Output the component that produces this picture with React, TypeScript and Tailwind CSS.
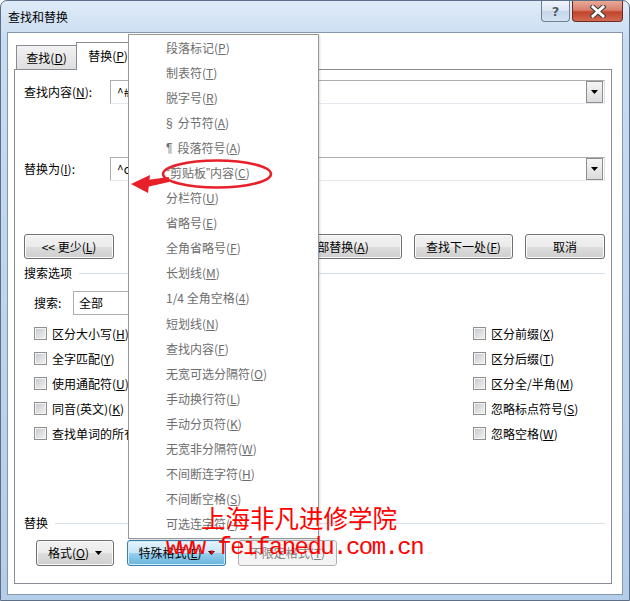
import type { ReactNode } from 'react'

const CJK = "font-['Microsoft_YaHei','Noto_Sans_CJK_SC',sans-serif]"

const Mn = ({ text, k, after = '' }: { text: string; k: string; after?: string }) => (
  <>
    {text}(<u>{k}</u>){after}
  </>
)

function Btn({ children, pressed = false }: { children: ReactNode; pressed?: boolean }) {
  const look = pressed
    ? 'border-[#3c7fb1] bg-[linear-gradient(#e5f4fc_0%,#c4e5f6_50%,#98d1ef_50%,#68b3db_100%)] shadow-[inset_0_0_0_1px_#d3ecf9]'
    : 'border-[#707070] bg-[linear-gradient(#f2f2f2_0%,#ebebeb_50%,#dddddd_50%,#cfcfcf_100%)] shadow-[inset_0_0_0_1px_#fbfbfb]'
  return (
    <div className={`flex h-full items-center justify-center rounded-[3px] border text-[12px] leading-none text-black ${look}`}>
      {children}
    </div>
  )
}

function Caret() {
  return (
    <svg width="7" height="4" viewBox="0 0 7 4" className="ml-[6px]">
      <path d="M0 0h7L3.5 4z" fill="#000" />
    </svg>
  )
}

function Combo({ value }: { value: string }) {
  return (
    <div className="flex h-[24px] flex-1 items-center border border-[#abadb3] border-r-[#dbdfe6] border-b-[#e3e9ef] bg-white pl-[6px] text-[12px]">
      <span className="flex-1">{value}</span>
      <div className="mr-[1px] flex h-[22px] w-[17px] items-center justify-center border border-[#8d8d8d] bg-[linear-gradient(#f5f5f5,#dcdcdc)]">
        <svg width="7" height="4" viewBox="0 0 7 4">
          <path d="M0 0h7L3.5 4z" fill="#000" />
        </svg>
      </div>
    </div>
  )
}

function Check({ children }: { children: ReactNode }) {
  return (
    <div className="flex h-[25px] items-center">
      <div className="h-[13px] w-[13px] border border-[#8e8f8f] bg-[#f4f4f4] p-[1px]">
        <div className="h-full w-full bg-[linear-gradient(135deg,#c6cacf,#f0f0f1)]" />
      </div>
      <span className="ml-[5px] text-[12px] leading-none">{children}</span>
    </div>
  )
}

function Section({ title }: { title: string }) {
  return (
    <div className="flex h-[14px] items-center text-[12px] leading-none">
      <span>{title}</span>
      <div className="ml-[7px] h-px flex-1 bg-[#d5dfe5]" />
    </div>
  )
}

const lat = "font-['Liberation_Sans']"

const menuItems: ReactNode[] = [
  <Mn text="段落标记" k="P" />,
  <Mn text="制表符" k="T" />,
  <Mn text="脱字号" k="R" />,
  <>
    <span className={`${lat} mr-[5px]`}>§</span>
    <Mn text="分节符" k="A" />
  </>,
  <>
    <span className={`${lat} mr-[5px]`}>¶</span>
    <Mn text="段落符号" k="A" />
  </>,
  <>
    <span className={lat}>“</span>剪贴板<span className={lat}>”</span>内容(<u>C</u>)
  </>,
  <Mn text="分栏符" k="U" />,
  <Mn text="省略号" k="E" />,
  <Mn text="全角省略号" k="F" />,
  <Mn text="长划线" k="M" />,
  <Mn text="1/4 全角空格" k="4" />,
  <Mn text="短划线" k="N" />,
  <Mn text="查找内容" k="F" />,
  <Mn text="无宽可选分隔符" k="O" />,
  <Mn text="手动换行符" k="L" />,
  <Mn text="手动分页符" k="K" />,
  <Mn text="无宽非分隔符" k="W" />,
  <Mn text="不间断连字符" k="H" />,
  <Mn text="不间断空格" k="S" />,
  <Mn text="可选连字符" k="-" />,
]

export default function App() {
  return (
    <div
      className={`relative flex h-[601px] w-[630px] flex-col overflow-hidden rounded-t-[7px] border border-[#5d6f86] bg-[linear-gradient(#dfebf8_0px,#c8dcf1_40px,#b4cde9_100%)] text-black ${CJK}`}
    >
      {/* title bar */}
      <div className="flex h-[31px] shrink-0">
        <div className="flex flex-1 items-center pl-[7px] text-[12px] leading-none">查找和替换</div>
        <div className="mr-[6px] flex h-[21px] gap-[2px]">
          <div className="flex w-[29px] items-center justify-center rounded-b-[4px] border border-t-0 border-[#707f94] bg-[linear-gradient(#f1f5fb_0%,#dbe5f2_50%,#c5d5e9_50%,#d4e2f3_100%)]">
            <span className="font-['DejaVu_Sans'] text-[13px] font-bold leading-none text-[#4b5a6c] [text-shadow:0_0_1px_#fff]">?</span>
          </div>
          <div className="flex w-[51px] items-center justify-center rounded-b-[4px] border border-t-0 border-[#6b2b20] bg-[linear-gradient(#e9a899_0%,#d9806d_45%,#c2442c_55%,#d46a52_100%)]">
            <svg width="16" height="13" viewBox="0 0 16 13">
              <path d="M3 2l10 9M13 2L3 11" stroke="#3b3b3b" strokeWidth="5" strokeLinecap="square" />
              <path d="M3 2l10 9M13 2L3 11" stroke="#fff" strokeWidth="3" strokeLinecap="square" />
            </svg>
          </div>
        </div>
      </div>

      {/* client */}
      <div className="ml-[6px] flex h-[563px] w-[616px] flex-col border border-[#8597ad] bg-white pl-[6px] pt-[9px]">
        {/* tabs */}
        <div className="flex h-[27px] items-end pl-[2px] text-[12px] leading-none">
          <div className="flex h-[24px] w-[61px] items-center justify-center border border-b-0 border-[#898c95] bg-[linear-gradient(#f2f2f2,#dedede)]">
            <Mn text="查找" k="D" />
          </div>
          <div className="relative z-10 -mb-px -ml-px flex h-[28px] w-[64px] items-center justify-center border border-b-0 border-[#898c95] bg-white pb-[2px]">
            <Mn text="替换" k="P" />
          </div>
        </div>

        {/* panel */}
        <div className="flex h-[515px] w-[598px] flex-col border border-[#898c95] pl-[9px] pr-[6px] pb-[17px] text-[12px] leading-none">
          <div className="mt-[10px] flex h-[24px] items-center">
            <div className="w-[86px]"><Mn text="查找内容" k="N" after=":" /></div>
            <Combo value="^#" />
          </div>
          <div className="mt-[53px] flex h-[24px] items-center">
            <div className="w-[86px]"><Mn text="替换为" k="I" after=":" /></div>
            <Combo value="^c" />
          </div>
          <div className="mt-[53px] flex h-[25px]">
            <div className="w-[90px]"><Btn>&lt;&lt; 更少(<u>L</u>)</Btn></div>
            <div className="flex-1" />
            <div className="w-[130px]"><Btn><Mn text="全部替换" k="A" /></Btn></div>
            <div className="ml-[12px] w-[99px]"><Btn><Mn text="查找下一处" k="F" /></Btn></div>
            <div className="ml-[12px] w-[80px]"><Btn>取消</Btn></div>
          </div>
          <div className="mt-[7px]"><Section title="搜索选项" /></div>
          <div className="mt-[11px] flex h-[24px] items-center pl-[10px]">
            <div className="w-[39px]">搜索:</div>
            <div className="flex h-[24px] w-[200px] items-center border border-[#abadb3] pl-[5px]">全部</div>
          </div>
          <div className="mt-[6px] flex pl-[10px]">
            <div className="flex w-[439px] flex-col">
              <Check><Mn text="区分大小写" k="H" /></Check>
              <Check><Mn text="全字匹配" k="Y" /></Check>
              <Check><Mn text="使用通配符" k="U" /></Check>
              <Check>同音(英文)(<u>K</u>)</Check>
              <Check>查找单词的所有形式(英文)(<u>W</u>)</Check>
            </div>
            <div className="flex flex-col">
              <Check><Mn text="区分前缀" k="X" /></Check>
              <Check><Mn text="区分后缀" k="T" /></Check>
              <Check><Mn text="区分全/半角" k="M" /></Check>
              <Check><Mn text="忽略标点符号" k="S" /></Check>
              <Check><Mn text="忽略空格" k="W" /></Check>
            </div>
          </div>
          <div className="flex-1" />
          <Section title="替换" />
          <div className="mt-[10px] flex h-[26px] pl-[12px]">
            <div className="w-[78px]"><Btn><Mn text="格式" k="O" /><Caret /></Btn></div>
            <div className="ml-[13px] w-[99px]">
              <Btn pressed>
                <Mn text="特殊格式" k="E" />
                <Caret />
              </Btn>
            </div>
            <div className="ml-[12px] w-[99px]">
              <div className="flex h-full items-center justify-center rounded-[3px] border border-[#adb2b5] bg-[#f4f4f4] text-[#838383]">
                <Mn text="不限定格式" k="T" />
              </div>
            </div>
          </div>
        </div>
      </div>

      {/* special format dropdown */}
      <div className="absolute left-[127px] top-[33px] z-20 flex h-[505px] w-[191px] flex-col border border-[#979797] bg-white shadow-[1px_1px_2px_rgba(0,0,0,0.15)]">
        {menuItems.map((it, i) => (
          <div key={i} className="flex h-[25.1px] items-center pl-[37px] text-[12px] leading-none text-[#6d6d6d]">
            {it}
          </div>
        ))}
      </div>

      {/* annotation */}
      <svg className="pointer-events-none absolute left-0 top-0 z-30" width="630" height="601">
        <ellipse cx="216" cy="173" rx="54" ry="13.5" fill="none" stroke="#e8202a" strokeWidth="2.5" />
        <path d="M146 179L168 176L168 181L146 186z" fill="#e8202a" />
        <path d="M130 183L149 174L147 192z" fill="#e8202a" />
      </svg>

      {/* watermark */}
      <div className="pointer-events-none absolute left-[200px] top-[505px] z-30 text-[24.5px] leading-[24px] text-[#ff0000]">
        上海非凡进修学院
      </div>
      <div className="pointer-events-none absolute left-[165px] top-[536px] z-30 font-['Liberation_Mono',monospace] text-[24px] leading-[22px] tracking-[-1.55px] text-[#ff0000]">
        www.feifanedu.com.cn
      </div>
    </div>
  )
}
